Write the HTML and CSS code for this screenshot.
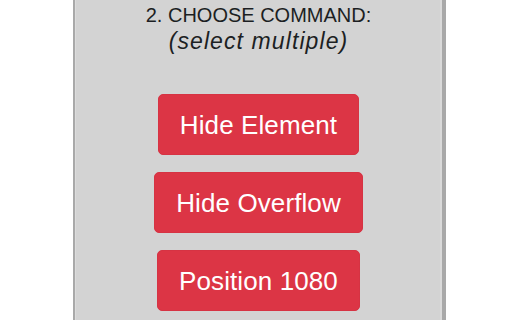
FILE: index.html
```html
<!DOCTYPE html>
<html>
<head>
<meta charset="utf-8">
<link rel="stylesheet" href="styles.css">
</head>
<body>
<div class="panel">
  <div class="title">2. CHOOSE COMMAND:</div>
  <div class="subtitle">(select multiple)</div>
  <div class="commands">
    <button class="btn">Hide Element</button>
    <button class="btn">Hide Overflow</button>
    <button class="btn">Position 1080</button>
  </div>
</div>
</body>
</html>
```

FILE: styles.css
```css
html, body {
  margin: 0;
  padding: 0;
  background: #ffffff;
  height: 320px;
  overflow: hidden;
}
.panel {
  box-sizing: border-box;
  margin-left: 73px;
  width: 373px;
  height: 320px;
  overflow: hidden;
  background: #d3d3d3;
  border-left: 2px solid #a9a9a9;
  border-right: 4px solid #a9a9a9;
  box-shadow: inset 1px 0 0 #dcdcdc, inset -2px 0 0 #dadada;
  padding-top: 2px;
  display: flex;
  flex-direction: column;
  align-items: center;
  font-family: "Liberation Sans", Arial, sans-serif;
  color: #1c1f23;
}
.title {
  font-size: 20px;
  line-height: 26px;
}
.subtitle {
  font-size: 23px;
  line-height: 26px;
  font-style: italic;
  letter-spacing: 1.1px;
}
.commands {
  margin-top: 40px;
  display: flex;
  flex-direction: column;
  align-items: center;
  gap: 17px;
}
.btn {
  font-family: "Liberation Sans", Arial, sans-serif;
  font-size: 26px;
  line-height: 31px;
  letter-spacing: 0.1px;
  color: #ffffff;
  background: #dc3545;
  border: 1px solid #d63343;
  border-radius: 5px;
  padding: 15px 21px 13px;
  margin: 0;
}
```
